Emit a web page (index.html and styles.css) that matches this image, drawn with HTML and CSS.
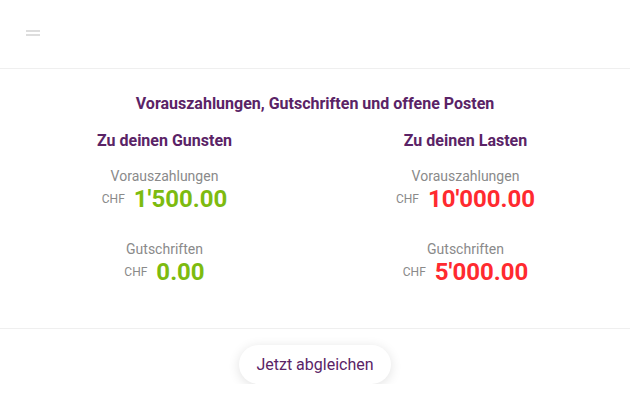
FILE: index.html
```html
<!DOCTYPE html>
<html lang="de">
<head>
    <meta charset="UTF-8">
    <meta name="viewport" content="width=device-width, initial-scale=1.0">
    <title>Vorauszahlungen</title>
    <link rel="stylesheet" href="styles.css">
</head>
<body>

    <!-- Header -->
    <div class="header">
        <div class="menu-icon">
            <span></span>
            <span></span>
        </div>
    </div>

    <!-- Balances -->
    <div class="content">
        <h1 class="title">Vorauszahlungen, Gutschriften und offene Posten</h1>

        <div class="columns">
            <div class="column">
                <h2>Zu deinen Gunsten</h2>
                <div class="item">
                    <div class="label">Vorauszahlungen</div>
                    <div class="amount-row">
                        <span class="currency">CHF</span>
                        <span class="amount positive">1'500.00</span>
                    </div>
                </div>
                <div class="item">
                    <div class="label">Gutschriften</div>
                    <div class="amount-row">
                        <span class="currency">CHF</span>
                        <span class="amount positive">0.00</span>
                    </div>
                </div>
            </div>

            <div class="column">
                <h2>Zu deinen Lasten</h2>
                <div class="item">
                    <div class="label">Vorauszahlungen</div>
                    <div class="amount-row">
                        <span class="currency">CHF</span>
                        <span class="amount negative">10'000.00</span>
                    </div>
                </div>
                <div class="item">
                    <div class="label">Gutschriften</div>
                    <div class="amount-row">
                        <span class="currency">CHF</span>
                        <span class="amount negative">5'000.00</span>
                    </div>
                </div>
            </div>
        </div>
    </div>

    <!-- Action -->
    <div class="footer">
        <button class="btn">Jetzt abgleichen</button>
    </div>

</body>
</html>
```

FILE: styles.css
```css
body {
    font-family: Roboto, "Liberation Sans", sans-serif;
    background-color: #fff;
    margin: 0;
    color: #5a2366;
}
.header {
    height: 69px;
    border-bottom: 1px solid #efefef;
    box-sizing: border-box;
    padding: 30px 0 0 26px;
}
.menu-icon span {
    display: block;
    width: 14px;
    height: 2px;
    background-color: #ddd;
    margin-bottom: 2px;
}
.content {
    padding: 25px 14px 42px;
    text-align: center;
}
.title {
    font-size: 16px;
    line-height: 19px;
    font-weight: bold;
    margin: 0 0 18px;
}
.columns {
    display: grid;
    grid-template-columns: 1fr 1fr;
}
.column h2 {
    font-size: 16px;
    line-height: 19px;
    font-weight: bold;
    margin: 0 0 18px;
}
.item {
    margin-bottom: 28px;
}
.item:last-child {
    margin-bottom: 0;
}
.label {
    font-size: 14px;
    line-height: 17px;
    color: #8a8a8a;
}
.amount-row {
    display: flex;
    justify-content: center;
    align-items: center;
    gap: 9px;
}
.currency {
    font-size: 12px;
    color: #8a8a8a;
}
.amount {
    font-size: 24px;
    line-height: 28px;
    font-weight: bold;
}
.positive {
    color: #7dbb0f;
}
.negative {
    color: #ff2a2f;
}
.footer {
    border-top: 1px solid #efefef;
    padding-top: 16px;
    text-align: center;
}
.btn {
    font-family: inherit;
    font-size: 16px;
    color: #5a2366;
    background-color: #fff;
    border: none;
    border-radius: 20px;
    width: 152px;
    height: 39px;
    box-shadow: 0 2px 12px rgba(0, 0, 0, 0.12);
    cursor: pointer;
}
```
